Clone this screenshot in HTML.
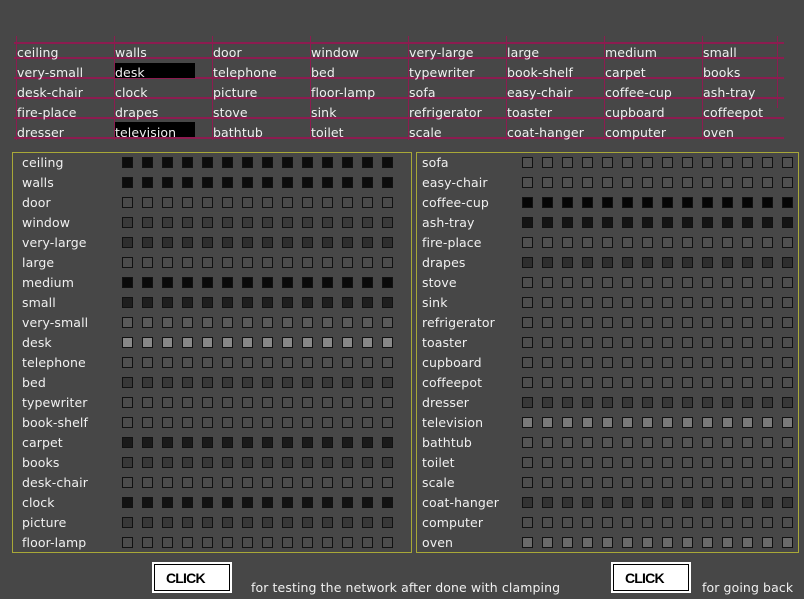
<!DOCTYPE html>
<html><head><meta charset="utf-8"><style>
*{margin:0;padding:0;box-sizing:border-box}
body{width:804px;height:599px;background:#474747;position:relative;overflow:hidden;font-family:"DejaVu Sans","Liberation Sans",sans-serif;font-size:12.5px;letter-spacing:0.1px;color:#f0f0f0}
.a{position:absolute;white-space:nowrap;line-height:16px;margin-top:1px}
.h{position:absolute;height:2px;background:#8c1c50}
.v{position:absolute;width:1px;background:#8c1c50}
.p{position:absolute;border:1px solid #a8a838}
.s{position:absolute;width:271px;height:11px;
background:repeating-linear-gradient(90deg,#111 0 11px,transparent 11px 20px) 0 0/100% 1px no-repeat,
repeating-linear-gradient(90deg,#111 0 11px,transparent 11px 20px) 0 100%/100% 1px no-repeat,
repeating-linear-gradient(90deg,#111 0 1px,var(--f) 1px 10px,#111 10px 11px,transparent 11px 20px)}
.b{position:absolute;width:80px;height:31px;background:#fff;padding:2px}
.b div{border:1px solid #000;height:100%;font-family:"Liberation Sans",sans-serif;font-weight:bold;font-size:14px;color:#000;padding:5px 0 0 11px;letter-spacing:-0.8px}
</style></head><body>
<div class="h" style="left:14px;top:42px;width:770px"></div>
<div class="h" style="left:14px;top:57px;width:770px"></div>
<div class="h" style="left:14px;top:77px;width:770px"></div>
<div class="h" style="left:14px;top:97px;width:770px"></div>
<div class="h" style="left:14px;top:117px;width:770px"></div>
<div class="h" style="left:14px;top:137px;width:770px"></div>
<div class="v" style="left:16px;top:36px;height:104px"></div>
<div class="v" style="left:114px;top:36px;height:104px"></div>
<div class="v" style="left:212px;top:36px;height:104px"></div>
<div class="v" style="left:310px;top:36px;height:104px"></div>
<div class="v" style="left:408px;top:36px;height:104px"></div>
<div class="v" style="left:506px;top:36px;height:104px"></div>
<div class="v" style="left:604px;top:36px;height:104px"></div>
<div class="v" style="left:702px;top:36px;height:104px"></div>
<div class="v" style="left:777px;top:36px;height:72px"></div>
<div style="position:absolute;left:115px;top:63px;width:80px;height:15px;background:#000"></div>
<div style="position:absolute;left:115px;top:122px;width:80px;height:15px;background:#000"></div>

<div class="a" style="left:17px;top:44px">ceiling</div><div class="a" style="left:115px;top:44px">walls</div><div class="a" style="left:213px;top:44px">door</div><div class="a" style="left:311px;top:44px">window</div><div class="a" style="left:409px;top:44px">very-large</div><div class="a" style="left:507px;top:44px">large</div><div class="a" style="left:605px;top:44px">medium</div><div class="a" style="left:703px;top:44px">small</div>
<div class="a" style="left:17px;top:64px">very-small</div><div class="a" style="left:115px;top:64px">desk</div><div class="a" style="left:213px;top:64px">telephone</div><div class="a" style="left:311px;top:64px">bed</div><div class="a" style="left:409px;top:64px">typewriter</div><div class="a" style="left:507px;top:64px">book-shelf</div><div class="a" style="left:605px;top:64px">carpet</div><div class="a" style="left:703px;top:64px">books</div>
<div class="a" style="left:17px;top:84px">desk-chair</div><div class="a" style="left:115px;top:84px">clock</div><div class="a" style="left:213px;top:84px">picture</div><div class="a" style="left:311px;top:84px">floor-lamp</div><div class="a" style="left:409px;top:84px">sofa</div><div class="a" style="left:507px;top:84px">easy-chair</div><div class="a" style="left:605px;top:84px">coffee-cup</div><div class="a" style="left:703px;top:84px">ash-tray</div>
<div class="a" style="left:17px;top:104px">fire-place</div><div class="a" style="left:115px;top:104px">drapes</div><div class="a" style="left:213px;top:104px">stove</div><div class="a" style="left:311px;top:104px">sink</div><div class="a" style="left:409px;top:104px">refrigerator</div><div class="a" style="left:507px;top:104px">toaster</div><div class="a" style="left:605px;top:104px">cupboard</div><div class="a" style="left:703px;top:104px">coffeepot</div>
<div class="a" style="left:17px;top:124px">dresser</div><div class="a" style="left:115px;top:124px">television</div><div class="a" style="left:213px;top:124px">bathtub</div><div class="a" style="left:311px;top:124px">toilet</div><div class="a" style="left:409px;top:124px">scale</div><div class="a" style="left:507px;top:124px">coat-hanger</div><div class="a" style="left:605px;top:124px">computer</div><div class="a" style="left:703px;top:124px">oven</div>

<div class="p" style="left:12px;top:152px;width:400px;height:401px"></div>
<div class="p" style="left:416px;top:152px;width:383px;height:401px"></div>

<div class="a" style="left:22px;top:154px">ceiling</div><div class="s" style="left:122px;top:157px;--f:#0c0c0c"></div>
<div class="a" style="left:22px;top:174px">walls</div><div class="s" style="left:122px;top:177px;--f:#0c0c0c"></div>
<div class="a" style="left:22px;top:194px">door</div><div class="s" style="left:122px;top:197px;--f:#4a4a4a"></div>
<div class="a" style="left:22px;top:214px">window</div><div class="s" style="left:122px;top:217px;--f:#3a3a3a"></div>
<div class="a" style="left:22px;top:234px">very-large</div><div class="s" style="left:122px;top:237px;--f:#2e2e2e"></div>
<div class="a" style="left:22px;top:254px">large</div><div class="s" style="left:122px;top:257px;--f:#4c4c4c"></div>
<div class="a" style="left:22px;top:274px">medium</div><div class="s" style="left:122px;top:277px;--f:#0a0a0a"></div>
<div class="a" style="left:22px;top:294px">small</div><div class="s" style="left:122px;top:297px;--f:#1e1e1e"></div>
<div class="a" style="left:22px;top:314px">very-small</div><div class="s" style="left:122px;top:317px;--f:#5a5a5a"></div>
<div class="a" style="left:22px;top:334px">desk</div><div class="s" style="left:122px;top:337px;--f:#888"></div>
<div class="a" style="left:22px;top:354px">telephone</div><div class="s" style="left:122px;top:357px;--f:#505050"></div>
<div class="a" style="left:22px;top:374px">bed</div><div class="s" style="left:122px;top:377px;--f:#383838"></div>
<div class="a" style="left:22px;top:394px">typewriter</div><div class="s" style="left:122px;top:397px;--f:#4c4c4c"></div>
<div class="a" style="left:22px;top:414px">book-shelf</div><div class="s" style="left:122px;top:417px;--f:#4c4c4c"></div>
<div class="a" style="left:22px;top:434px">carpet</div><div class="s" style="left:122px;top:437px;--f:#1a1a1a"></div>
<div class="a" style="left:22px;top:454px">books</div><div class="s" style="left:122px;top:457px;--f:#383838"></div>
<div class="a" style="left:22px;top:474px">desk-chair</div><div class="s" style="left:122px;top:477px;--f:#4c4c4c"></div>
<div class="a" style="left:22px;top:494px">clock</div><div class="s" style="left:122px;top:497px;--f:#121212"></div>
<div class="a" style="left:22px;top:514px">picture</div><div class="s" style="left:122px;top:517px;--f:#383838"></div>
<div class="a" style="left:22px;top:534px">floor-lamp</div><div class="s" style="left:122px;top:537px;--f:#4c4c4c"></div>

<div class="a" style="left:422px;top:154px">sofa</div><div class="s" style="left:522px;top:157px;--f:#505050"></div>
<div class="a" style="left:422px;top:174px">easy-chair</div><div class="s" style="left:522px;top:177px;--f:#505050"></div>
<div class="a" style="left:422px;top:194px">coffee-cup</div><div class="s" style="left:522px;top:197px;--f:#050505"></div>
<div class="a" style="left:422px;top:214px">ash-tray</div><div class="s" style="left:522px;top:217px;--f:#141414"></div>
<div class="a" style="left:422px;top:234px">fire-place</div><div class="s" style="left:522px;top:237px;--f:#505050"></div>
<div class="a" style="left:422px;top:254px">drapes</div><div class="s" style="left:522px;top:257px;--f:#2e2e2e"></div>
<div class="a" style="left:422px;top:274px">stove</div><div class="s" style="left:522px;top:277px;--f:#4e4e4e"></div>
<div class="a" style="left:422px;top:294px">sink</div><div class="s" style="left:522px;top:297px;--f:#4e4e4e"></div>
<div class="a" style="left:422px;top:314px">refrigerator</div><div class="s" style="left:522px;top:317px;--f:#4e4e4e"></div>
<div class="a" style="left:422px;top:334px">toaster</div><div class="s" style="left:522px;top:337px;--f:#4e4e4e"></div>
<div class="a" style="left:422px;top:354px">cupboard</div><div class="s" style="left:522px;top:357px;--f:#4e4e4e"></div>
<div class="a" style="left:422px;top:374px">coffeepot</div><div class="s" style="left:522px;top:377px;--f:#4e4e4e"></div>
<div class="a" style="left:422px;top:394px">dresser</div><div class="s" style="left:522px;top:397px;--f:#383838"></div>
<div class="a" style="left:422px;top:414px">television</div><div class="s" style="left:522px;top:417px;--f:#7a7a7a"></div>
<div class="a" style="left:422px;top:434px">bathtub</div><div class="s" style="left:522px;top:437px;--f:#555"></div>
<div class="a" style="left:422px;top:454px">toilet</div><div class="s" style="left:522px;top:457px;--f:#4e4e4e"></div>
<div class="a" style="left:422px;top:474px">scale</div><div class="s" style="left:522px;top:477px;--f:#4e4e4e"></div>
<div class="a" style="left:422px;top:494px">coat-hanger</div><div class="s" style="left:522px;top:497px;--f:#333"></div>
<div class="a" style="left:422px;top:514px">computer</div><div class="s" style="left:522px;top:517px;--f:#4e4e4e"></div>
<div class="a" style="left:422px;top:534px">oven</div><div class="s" style="left:522px;top:537px;--f:#6a6a6a"></div>

<div class="b" style="left:152px;top:562px"><div>CLICK</div></div>
<div class="b" style="left:611px;top:562px"><div>CLICK</div></div>
<div class="a" style="left:251px;top:579px">for testing the network after done with clamping</div>
<div class="a" style="left:702px;top:579px">for going back</div>
</body></html>
